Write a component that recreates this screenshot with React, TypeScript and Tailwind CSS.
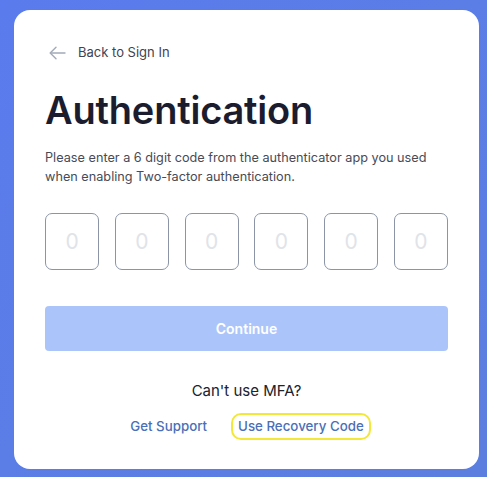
import React from "react";

export default function App() {
  const digits = [0, 1, 2, 3, 4, 5];
  return (
    <div
      className="w-[487px] h-[477px] bg-gradient-to-br from-[#5a7bed] to-[#5b7fdf] pt-[10px] pl-[14px] pr-[8px] overflow-hidden"
      style={{ fontFamily: "Inter, 'Noto Sans', sans-serif" }}
    >
      <div className="h-[459px] rounded-[16px] bg-white px-[31px] pt-[33px] flex flex-col">
        <div className="flex items-center h-5 gap-[12px] pl-[4px]">
          <svg width="17" height="14" viewBox="0 0 17 14" fill="none" stroke="#a3aab8" strokeWidth="1.4" strokeLinecap="round" strokeLinejoin="round">
            <path d="M16 7H1.5" />
            <path d="M7 1.2L1.2 7L7 12.8" />
          </svg>
          <span className="text-[13px] text-[#3f4351]">Back to Sign In</span>
        </div>
        <h1 className="mt-[23px] text-[38px] leading-[48px] font-semibold text-[#1b1c2e] tracking-[-0.2px]">
          Authentication
        </h1>
        <p className="mt-[14px] text-[12.7px] leading-[19px] text-[#474b57]">
          Please enter a 6 digit code from the authenticator app you used when enabling Two-factor authentication.
        </p>
        <div className="mt-[27px] grid grid-cols-6 gap-[15.6px]">
          {digits.map((d) => (
            <div
              key={d}
              className="h-[57px] rounded-[7px] border border-[#8c95a6] flex items-center justify-center text-[21px] text-[#e0e3e8]"
            >
              0
            </div>
          ))}
        </div>
        <button className="mt-[36px] h-[45px] w-full rounded-[4px] bg-[#abc5fb] text-white text-[14px] font-semibold">
          Continue
        </button>
        <div className="mt-[29px] text-center text-[15px] text-[#20222c]">Can't use MFA?</div>
        <div className="mt-[10px] flex items-center justify-center gap-[24px] pl-[8px]">
          <span className="text-[13.3px] text-[#4a6fb8] font-medium">Get Support</span>
          <span className="text-[13.3px] text-[#4a6fb8] font-medium border-[2.5px] border-[#f3e83a] rounded-[10px] px-[5px] py-[2px]">
            Use Recovery Code
          </span>
        </div>
      </div>
    </div>
  );
}
